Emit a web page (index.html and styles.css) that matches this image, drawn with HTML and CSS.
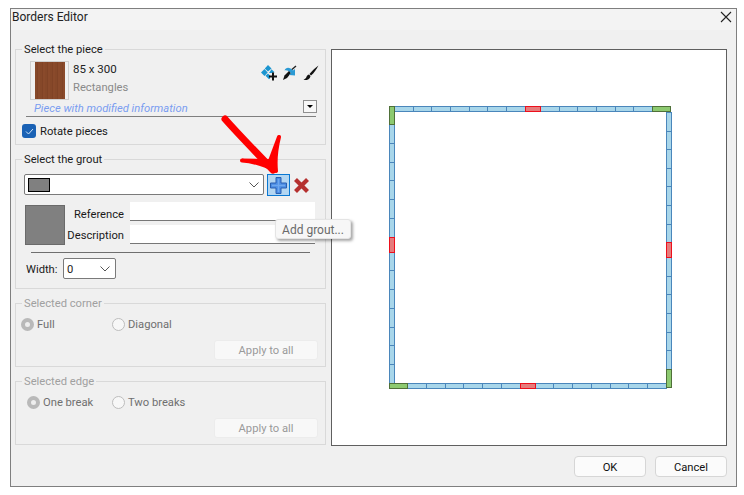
FILE: index.html
```html
<!DOCTYPE html>
<html lang="en">
<head>
<meta charset="utf-8">
<title>Borders Editor</title>
<link rel="stylesheet" href="styles.css">
</head>
<body>
<div class="window">
  <div class="titlebar">
    <span class="title">Borders Editor</span>
    <svg class="close" width="12" height="12" viewBox="0 0 12 12"><path d="M1 1l10 10M11 1L1 11" stroke="#222" stroke-width="1.1" fill="none"/></svg>
  </div>
  <div class="content">
    <div class="panel">
      <fieldset class="group group-piece">
        <legend>Select the piece</legend>
        <div class="piece-row">
          <div class="thumb"><div class="wood"></div></div>
          <div class="piece-info">
            <div class="size">85 x 300</div>
            <div class="shape">Rectangles</div>
          </div>
          <div class="tools">
            <svg width="16" height="16" viewBox="0 0 16 16"><g fill="#1b95d0"><path d="M7 0l3.500 3.500L7 6.500 3.800 3.500z"/><path d="M3.500 4l3.200 3.500L3.500 11 0 7.500z"/><path d="M10.500 4.200L13.600 7.200 11 8H8z"/><path d="M7 8.500l2 2v3l-1 .8-3.500-3.500z"/></g><path d="M12 7.500v8M8 11.500h8" stroke="#111" stroke-width="2"/></svg>
            <svg width="16" height="16" viewBox="0 0 16 16"><path d="M14 1L7 7" stroke="#222" stroke-width="1.400"/><path d="M7 6l2 2-4 5-4 2 1.500-4.500z" fill="#111"/><path d="M2.500 5.500C4 1.500 8 2 11 5.500l2-1.500v6.500l-6-.5 2-1.800C7 6 5 5 2.500 5.500z" fill="#2b9ad4"/></svg>
            <svg width="16" height="16" viewBox="0 0 16 16"><path d="M15.500.5C12 3 9 6 6.500 9l1.500 1.500C11 8 13.500 4 15.500.5z" fill="#111"/><path d="M6 9.500c-2 .5-2.500 2-3 3.500L.5 15c3 .5 6.500-.5 7-4z" fill="#111"/></svg>
          </div>
        </div>
        <div class="modified-row">
          <span class="modified">Piece with modified information</span>
          <span class="drop"><i></i></span>
        </div>
        <div class="rule rule-piece"></div>
        <label class="check">
          <span class="box"><svg width="9" height="7" viewBox="0 0 9 7"><path d="M1 3.500l2.500 2.500L8 1" stroke="#cfe4f7" stroke-width="1" fill="none"/></svg></span>
          <span>Rotate pieces</span>
        </label>
      </fieldset>

      <fieldset class="group group-grout">
        <legend>Select the grout</legend>
        <div class="grout-row">
          <div class="combo">
            <span class="combo-swatch"></span>
            <svg class="chev" width="10" height="6" viewBox="0 0 10 6"><path d="M.5.500L5 5 9.500.500" stroke="#555" fill="none"/></svg>
          </div>
          <div class="add-btn">
            <svg width="19" height="19" viewBox="0 0 19 19"><path d="M7 1.500h5v5.500h5.500v5H12v5.500H7V12H1.500V7H7z" fill="#4a8ce4" stroke="#2a5fb0"/><path d="M9.500 3v13M3 9.500h13" stroke="#6fa8ee" stroke-width="1.500"/></svg>
          </div>
          <svg class="del" width="17" height="17" viewBox="0 0 17 17"><path d="M2.500 2.500l12 12M14.500 2.500l-12 12" stroke="#b5302f" stroke-width="4.200"/></svg>
        </div>
        <div class="info-row">
          <div class="big-swatch"></div>
          <div class="fields">
            <div class="field field-ref"><span class="field-label">Reference</span><span class="input"></span></div>
            <div class="field field-desc"><span class="field-label">Description</span><span class="input"></span></div>
          </div>
        </div>
        <div class="rule rule-grout"></div>
        <div class="width-row">
          <span class="width-label">Width:</span>
          <div class="select"><span>0</span><svg width="10" height="6" viewBox="0 0 10 6"><path d="M.5.500L5 5 9.500.500" stroke="#555" fill="none"/></svg></div>
        </div>
      </fieldset>

      <fieldset class="group group-off">
        <legend>Selected corner</legend>
        <div class="radios radios-corner">
          <span class="radio-item"><i class="radio on"></i>Full</span>
          <span class="radio-item"><i class="radio"></i>Diagonal</span>
        </div>
        <div class="apply">Apply to all</div>
      </fieldset>

      <fieldset class="group group-off">
        <legend>Selected edge</legend>
        <div class="radios radios-edge">
          <span class="radio-item"><i class="radio on"></i>One break</span>
          <span class="radio-item"><i class="radio"></i>Two breaks</span>
        </div>
        <div class="apply">Apply to all</div>
      </fieldset>
    </div>

    <div class="canvas">
      <div class="edge top">
        <b></b><b></b><b></b><b></b><b></b><b></b><b></b><b class="brk"></b><b></b><b></b><b></b><b></b><b></b><b></b><b class="cor"></b>
      </div>
      <div class="edge right">
        <b></b><b></b><b></b><b></b><b></b><b></b><b></b><b class="brk"></b><b></b><b></b><b></b><b></b><b></b><b></b><b class="cor"></b>
      </div>
      <div class="edge bottom">
        <b class="cor"></b><b></b><b></b><b></b><b></b><b></b><b></b><b class="brk"></b><b></b><b></b><b></b><b></b><b></b><b></b><b></b>
      </div>
      <div class="edge left">
        <b class="cor"></b><b></b><b></b><b></b><b></b><b></b><b></b><b class="brk"></b><b></b><b></b><b></b><b></b><b></b><b></b><b></b>
      </div>
    </div>
  </div>
  <div class="footer">
    <div class="btn">OK</div>
    <div class="btn">Cancel</div>
  </div>
  <div class="tooltip">Add grout...</div>
  <svg class="arrow" width="70" height="70" viewBox="0 0 70 70"><path d="M5 4C20 21 36 37 53 55" stroke="#f00" stroke-width="7" stroke-linecap="round" fill="none"/><path d="M22 45.500c10 .5 20 3 34 10.500-1-10 0-22 3-34L50 46z" fill="#f00" stroke="#f00" stroke-width="4" stroke-linecap="round" stroke-linejoin="round"/></svg>
</div>
</body>
</html>
```
FILE: styles.css
```css
* { box-sizing: border-box; }
html, body { margin: 0; padding: 0; background: #fff; }
body {
  width: 744px;
  height: 495px;
  overflow: hidden;
  padding: 8px 0 0 10px;
  font-family: Roboto, "Open Sans", sans-serif;
  font-size: 11.2px;
  color: #1a1a1a;
}
.window {
  position: relative;
  width: 727px;
  height: 479px;
  border: 1px solid #7f7f7f;
  background: #f0f0f0;
  display: flex;
  flex-direction: column;
}
.titlebar {
  height: 21px;
  flex: none;
  background: #f3f3f3;
  display: flex;
  align-items: center;
  justify-content: space-between;
  padding: 0 3px 5px 1px;
}
.title { font-size: 12px; color: #222; }
.close { margin-right: 1px; }
.content {
  flex: none;
  height: 416px;
  display: flex;
  align-items: flex-start;
  padding: 11px 0 0 4px;
  gap: 5px;
}
.panel {
  width: 311px;
  display: flex;
  flex-direction: column;
  gap: 6px;
}
.group {
  margin: 0;
  padding: 0;
  min-width: 0;
  border: 1px solid #d9d9d9;
  width: 311px;
}
.group legend {
  margin-left: 6px;
  padding: 0 2px;
  height: 16px;
  line-height: 18px;
}
.group-piece { height: 104px; }
.group-grout { height: 138px; }
.group-off { height: 72px; }
.group-off, .group-off legend { color: #a0a0a0; }

.piece-row { display: flex; height: 38px; margin: 4px 0 0 14px; }
.thumb { width: 39px; height: 39px; border: 1px solid #cfcfcf; padding: 0 3px 0 4px; }
.wood {
  height: 37px;
  background: repeating-linear-gradient(90deg, #864829 0 2px, #804326 2px 3px, #8a4a2b 3px 5px);
}
.piece-info { margin-left: 4px; }
.size { line-height: 17px; color: #222; font-size: 11.5px; }
.shape { line-height: 19px; color: #8a8a8a; }
.tools { margin-left: auto; margin-right: 6px; display: flex; gap: 5px; height: 18px; align-items: center; margin-top: 3px; }
.modified-row { display: flex; align-items: center; justify-content: space-between; margin: 0 8px 0 18px; height: 14px; }
.modified { color: #7a9df0; font-style: italic; padding-top: 4px; }
.drop { width: 14px; height: 13px; border: 1px solid #8f8f8f; background: #f7f7f7; display: flex; align-items: center; justify-content: center; }
.drop i { width: 0; height: 0; border: 3px solid transparent; border-top: 3px solid #000; border-bottom: 0; }
.rule { height: 1px; background: #7f7f7f; }
.rule-piece { margin: 3px 9px 0 10px; }
.check { display: flex; align-items: center; gap: 4px; margin: 7px 0 0 6px; height: 14px; }
.box { width: 14px; height: 14px; background: #1a62b5; border-radius: 3px; display: flex; align-items: center; justify-content: center; }

.grout-row { display: flex; align-items: flex-start; margin: 7px 0 0 8px; }
.combo {
  width: 240px; height: 21px; background: #fff; border: 1px solid #7a7a7a; border-radius: 2px;
  display: flex; align-items: center; justify-content: space-between; padding: 0 4px 0 3px;
}
.combo-swatch { width: 22px; height: 14px; background: #808080; border: 1px solid #000; }
.add-btn { width: 23px; height: 22px; margin-left: 3px; background: #b3d6f2; border: 1px solid #0a78d2; display: flex; align-items: center; justify-content: center; }
.del { margin: 3px 0 0 3px; }
.info-row { display: flex; margin: 9px 0 0 9px; }
.big-swatch { width: 40px; height: 40px; background: #808080; border: 1px solid #6a6a6a; }
.fields { display: flex; flex-direction: column; gap: 4px; margin-top: -3px; }
.field { display: flex; align-items: center; height: 19px; }
.field-label { width: 59px; text-align: right; }
.field-ref .field-label { margin-top: 6px; }
.field-desc .field-label { margin-top: 2px; }
.input { width: 185px; height: 19px; margin-left: 6px; background: #fff; border-bottom: 1px solid #777; }
.rule-grout { margin: 7px 15px 0 15px; background: #6f6f6f; }
.width-row { display: flex; align-items: center; margin: 5px 0 0 10px; }
.width-label { width: 37px; padding-top: 2px; }
.select {
  width: 53px; height: 21px; background: #fff; border: 1px solid #7a7a7a; border-radius: 2px;
  display: flex; align-items: center; justify-content: space-between; padding: 0 5px 0 3px;
}
.select span { padding-top: 2px; }

.radios { display: flex; height: 16px; margin-top: 5px; }
.radios-corner { padding-left: 5px; }
.radios-corner .radio-item:first-child { width: 91px; }
.radios-edge { padding-left: 11px; }
.radios-edge .radio-item:first-child { width: 85px; }
.radio-item { display: flex; align-items: center; gap: 3px; color: #6f6f6f; }
.radio { width: 13px; height: 13px; border-radius: 50%; border: 1px solid #bdbdbd; background: #f7f7f7; flex: none; }
.radio.on { border: 4px solid #b9b9b9; background: #eee; }
.apply {
  width: 104px; height: 20px; margin: 8px 0 0 198px;
  background: #f8f8f8; border: 1px solid #ececec; border-radius: 3px;
  color: #9a9a9a; text-align: center; line-height: 20px;
}

.canvas {
  position: relative;
  width: 396px;
  height: 397px;
  margin-top: 8px;
  background: #fff;
  border: 1px solid #5f5f5f;
}
.edge { position: absolute; display: flex; }
.edge b { flex: 1 1 0; background: #a8d6ea; border: 1px solid #4a86bb; margin: 0 -1px 0 0; }
.edge b.brk { flex: 0 0 16px; background: #e67c7c; border-color: #ec0f1c; position: relative; z-index: 1; }
.edge b.cor { flex: 0 0 19px; background: #8dca70; border-color: #4f7039; position: relative; z-index: 1; }
.top { left: 62px; top: 56px; width: 276px; height: 6px; }
.bottom { left: 57px; top: 333px; width: 277px; height: 6px; }
.left, .right { flex-direction: column; }
.left b, .right b { margin: 0 0 -1px 0; }
.left { left: 57px; top: 56px; width: 6px; height: 277px; }
.right { left: 334px; top: 62px; width: 6px; height: 275px; }

.footer { flex: 1; display: flex; justify-content: flex-end; gap: 9px; padding: 10px 9px 0 0; }
.btn {
  width: 72px; height: 21px; background: #fbfbfb; border: 1px solid #d6d6d6; border-radius: 4px;
  text-align: center; line-height: 21px; color: #111;
}
.tooltip {
  position: absolute; left: 264px; top: 210px; width: 76px; height: 20px;
  background: #f7f7f7; border: 1px solid #e4e4e4; border-radius: 3px;
  box-shadow: 2px 2px 3px rgba(0,0,0,.35);
  color: #6a6a6a; text-align: center; line-height: 20px; font-size: 12px;
}
.arrow { position: absolute; left: 209px; top: 106px; overflow: visible; }
```
